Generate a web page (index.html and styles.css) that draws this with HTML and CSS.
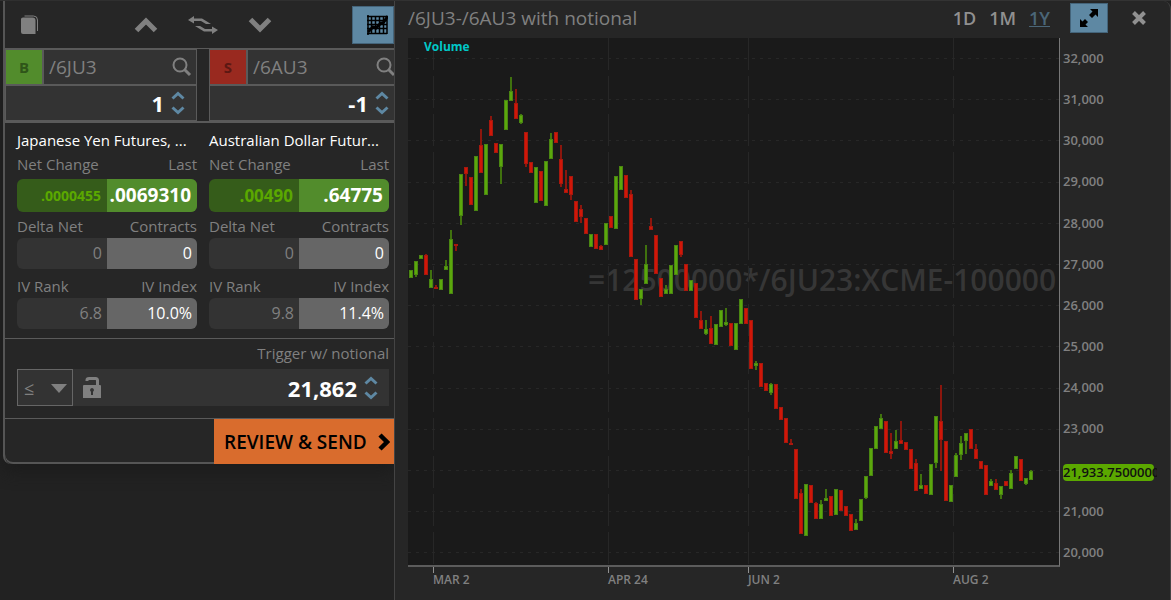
FILE: index.html
```html
<!DOCTYPE html>
<html lang="en">
    <head>
        <meta charset="UTF-8" />
        <meta name="viewport" content="width=device-width, initial-scale=1.0"/>
        <title>/6JU3-/6AU3 with notional</title>
        <link rel="stylesheet" href="styles.css">
    </head>
    <body>
        <div class="app">
            <aside class="side">
                <form class="ticket">
                    <div class="toolbar">
                        <button type="button" class="icon-btn" aria-label="Copy">
                            <svg width="18" height="20" viewBox="0 0 18 20"><path d="M3.500 1h9q4 0 4 4v11" fill="none" stroke="#808080"/><path d="M2 2.500h9.500q3 0 3 3V19H2q-2 0-2-2V4q0-1.500 2-1.500z" fill="#808080"/></svg>
                        </button>
                        <div class="moves">
                            <button type="button" class="icon-btn" aria-label="Up">
                                <svg width="24" height="16" viewBox="0 0 24 16"><path d="M2.500 13.500L12 4l9.500 9.500" fill="none" stroke="#808080" stroke-width="5"/></svg>
                            </button>
                            <button type="button" class="icon-btn" aria-label="Swap">
                                <svg width="32" height="20" viewBox="0 0 32 20"><path d="M1 5l6-4v2.500h8l9 5.500h-5l-5-3H7v2.500zM31 15l-6 4v-2.500h-8L8 11h5l5 3h7v-2.500z" fill="#808080"/></svg>
                            </button>
                            <button type="button" class="icon-btn" aria-label="Down">
                                <svg width="24" height="16" viewBox="0 0 24 16"><path d="M2.500 2.500L12 12l9.500-9.500" fill="none" stroke="#808080" stroke-width="5"/></svg>
                            </button>
                        </div>
                        <button type="button" class="blue-btn chart-toggle" aria-label="Chart">
                            <svg width="21" height="20" viewBox="0 0 21 20"><path d="M1 0v20M4.500 1v18M8.500 1v18M12.500 1v18M16.500 1v18M20 1v18M0 1.500h20M0 5.500h20M0 9.500h20M0 13.500h20M0 18.500h20" stroke="#000" stroke-width="1.500" fill="none"/><path d="M1 17l5-5 3 1 5-5 2 0 5-7" stroke="#000" stroke-width="3" fill="none"/></svg>
                        </button>
                    </div>

                    <div class="legs">
                        <div class="leg">
                            <div class="leg-row">
                                <button type="button" class="side-btn buy">B</button>
                                <input class="symbol" type="text" value="/6JU3" aria-label="Symbol 1">
                                <svg class="search" width="20" height="20" viewBox="0 0 20 20"><circle cx="8" cy="8" r="6.500" fill="none" stroke="#808080" stroke-width="2"/><path d="M12.500 12.500l5.500 5.500" stroke="#808080" stroke-width="3"/></svg>
                            </div>
                            <div class="leg-row">
                                <input class="qty" type="text" value="1" aria-label="Quantity 1">
                                <div class="spin">
                                    <button type="button" aria-label="Increase"><svg width="14" height="9" viewBox="0 0 14 9"><path d="M1.500 7.500L7 2.500l5.500 5" /></svg></button>
                                    <button type="button" aria-label="Decrease"><svg width="14" height="9" viewBox="0 0 14 9"><path d="M1.500 1.500L7 6.500l5.500-5" /></svg></button>
                                </div>
                            </div>
                        </div>
                        <div class="leg">
                            <div class="leg-row">
                                <button type="button" class="side-btn sell">S</button>
                                <input class="symbol" type="text" value="/6AU3" aria-label="Symbol 2">
                                <svg class="search" width="20" height="20" viewBox="0 0 20 20"><circle cx="8" cy="8" r="6.500" fill="none" stroke="#808080" stroke-width="2"/><path d="M12.500 12.500l5.500 5.500" stroke="#808080" stroke-width="3"/></svg>
                            </div>
                            <div class="leg-row">
                                <input class="qty" type="text" value="-1" aria-label="Quantity 2">
                                <div class="spin">
                                    <button type="button" aria-label="Increase"><svg width="14" height="9" viewBox="0 0 14 9"><path d="M1.500 7.500L7 2.500l5.500 5" /></svg></button>
                                    <button type="button" aria-label="Decrease"><svg width="14" height="9" viewBox="0 0 14 9"><path d="M1.500 1.500L7 6.500l5.500-5" /></svg></button>
                                </div>
                            </div>
                        </div>
                    </div>

                    <div class="quotes">
                        <div class="quote">
                            <div class="name">Japanese Yen Futures, ...</div>
                            <div class="labels"><span>Net Change</span><span>Last</span></div>
                            <div class="pair price"><span class="small">.0000455</span><span>.0069310</span></div>
                            <div class="labels"><span>Delta Net</span><span>Contracts</span></div>
                            <div class="pair"><span>0</span><span>0</span></div>
                            <div class="labels iv"><span>IV Rank</span><span>IV Index</span></div>
                            <div class="pair"><span>6.8</span><span>10.0%</span></div>
                        </div>
                        <div class="quote">
                            <div class="name">Australian Dollar Futur...</div>
                            <div class="labels"><span>Net Change</span><span>Last</span></div>
                            <div class="pair price"><span>.00490</span><span>.64775</span></div>
                            <div class="labels"><span>Delta Net</span><span>Contracts</span></div>
                            <div class="pair"><span>0</span><span>0</span></div>
                            <div class="labels iv"><span>IV Rank</span><span>IV Index</span></div>
                            <div class="pair"><span>9.8</span><span>11.4%</span></div>
                        </div>
                    </div>

                    <div class="trigger">
                        <label for="trigger">Trigger w/ notional</label>
                        <div class="trigger-row">
                            <div class="compare">
                                <select aria-label="Condition"><option>≤</option><option>≥</option></select>
                                <svg class="caret" width="16" height="9" viewBox="0 0 16 9"><path d="M0 0h16L8 9z" fill="#808080"/></svg>
                            </div>
                            <svg class="lock" width="18" height="21" viewBox="0 0 18 21"><path d="M4 4V3q0-1.500 2-1.500h6.500q2 0 2 2V9" fill="none" stroke="#808080" stroke-width="3"/><path fill-rule="evenodd" d="M1 8h16q1 0 1 1v12H0V9q0-1 1-1zm8 3a2 2 0 0 0-1 3.700V18h2v-3.300A2 2 0 0 0 9 11z" fill="#808080"/></svg>
                            <input class="qty" id="trigger" type="text" value="21,862">
                            <div class="spin">
                                <button type="button" aria-label="Increase"><svg width="14" height="9" viewBox="0 0 14 9"><path d="M1.500 7.500L7 2.500l5.500 5" /></svg></button>
                                <button type="button" aria-label="Decrease"><svg width="14" height="9" viewBox="0 0 14 9"><path d="M1.500 1.500L7 6.500l5.500-5" /></svg></button>
                            </div>
                        </div>
                    </div>

                    <div class="send-row">
                        <button type="submit" class="send">REVIEW &amp; SEND
                            <svg width="12" height="18" viewBox="0 0 12 18"><path d="M2 2l7 7-7 7" fill="none" stroke="#000" stroke-width="4.500"/></svg>
                        </button>
                    </div>
                </form>
            </aside>

            <main class="chart">
                <header class="chart-head">
                    <h1>/6JU3-/6AU3 with notional</h1>
                    <nav class="ranges">
                        <a href="#1d">1D</a>
                        <a href="#1m">1M</a>
                        <a href="#1y" class="active">1Y</a>
                    </nav>
                    <button type="button" class="blue-btn expand" aria-label="Expand">
                        <svg width="20" height="20" viewBox="0 0 20 20"><path d="M19 1v8l-2.500-2.500-3.500 3.500-3-3 3.500-3.500L11 1zM1 19v-8l2.500 2.500L6 11l3 3-2.500 2.500L9 19z" fill="#000"/></svg>
                    </button>
                    <button type="button" class="icon-btn close" aria-label="Close">
                        <svg width="14" height="14" viewBox="0 0 14 14"><path d="M1.500 1.500l11 11M12.500 1.500l-11 11" stroke="#909090" stroke-width="4"/></svg>
                    </button>
                </header>
                <div class="chart-body">
                    <div class="plot">
                        <div class="watermark">=12500000*/6JU23:XCME-100000</div>
                        <svg id="candles" viewBox="0 0 651 527" preserveAspectRatio="none" shape-rendering="crispEdges"></svg>
                        <div class="study">Volume</div>
                    </div>
                    <div class="y-axis">
                        <span>32,000</span>
                        <span>31,000</span>
                        <span>30,000</span>
                        <span>29,000</span>
                        <span>28,000</span>
                        <span>27,000</span>
                        <span>26,000</span>
                        <span>25,000</span>
                        <span>24,000</span>
                        <span>23,000</span>
                        <span class="current"><b>21,933.7500000</b></span>
                        <span>21,000</span>
                        <span>20,000</span>
                    </div>
                    <div class="x-axis">
                        <span>MAR 2</span>
                        <span>APR 24</span>
                        <span>JUN 2</span>
                        <span>AUG 2</span>
                    </div>
                </div>
            </main>
        </div>
        <script src="chart.js"></script>
    </body>
</html>
```
FILE: styles.css
```css
* {
    box-sizing: border-box;
}
body {
    margin: 0;
    background-color: #222;
    color: #808080;
    font-family: "Open Sans", "Noto Sans", sans-serif;
    font-size: 15px;
}
button, input, select {
    margin: 0;
    padding: 0;
    border: 0;
    border-radius: 0;
    background: none;
    color: inherit;
    font-family: inherit;
}
svg {
    display: block;
    flex: none;
}
.app {
    display: flex;
    min-height: 100vh;
    border-top: 1px solid #333;
}
.side {
    flex: none;
    width: 394px;
    padding-left: 3px;
}
.ticket {
    overflow: hidden;
    border-left: 2px solid #555;
    border-radius: 0 0 0 8px;
    background-color: #262626;
    box-shadow: 0 8px 16px #1c1c1c;
}

/* toolbar */
.toolbar {
    display: flex;
    align-items: center;
    justify-content: space-between;
    height: 48px;
    padding-left: 16px;
    border-bottom: 1px solid #5a5a5a;
}
.icon-btn {
    display: flex;
}
.moves {
    display: flex;
    align-items: center;
    gap: 29px;
    padding-left: 14px;
}
.blue-btn {
    display: flex;
    align-items: center;
    justify-content: center;
    border: 1px solid #44647a;
    background-color: #5e88a3;
}
.chart-toggle {
    width: 42px;
    height: 38px;
    padding-left: 8px;
}

/* legs */
.legs {
    display: grid;
    grid-template-columns: 192px 192px;
    gap: 12px;
    border-bottom: 2px solid #5a5a5a;
}
.leg-row {
    display: flex;
    align-items: center;
    height: 36px;
    border: 1px solid #5a5a5a;
    background-color: #333;
}
.side-btn {
    width: 38px;
    height: 34px;
    border-right: 2px solid #5a5a5a;
    font-size: 15px;
    font-weight: bold;
}
.buy {
    background-color: #528c2c;
    color: #2f5519;
}
.sell {
    background-color: #99291f;
    color: #5c1813;
}
.symbol {
    flex: 1;
    min-width: 0;
    height: 32px;
    padding-left: 5px;
    font-size: 19px;
}
.search {
    margin-right: 4px;
}
.qty {
    flex: 1;
    min-width: 0;
    height: 32px;
    padding-right: 7px;
    color: #fff;
    font-size: 22px;
    font-weight: bold;
    text-align: right;
}
.spin {
    display: flex;
    flex-direction: column;
    gap: 6px;
    margin-right: 11px;
}
.spin button {
    display: block;
}
.spin path {
    fill: none;
    stroke: #5e88a3;
    stroke-width: 3;
}

/* quotes */
.quotes {
    display: grid;
    grid-template-columns: 180px 180px;
    gap: 12px;
    padding: 5px 0 9px 12px;
    border-bottom: 1px solid #5a5a5a;
}
.name, .labels {
    height: 24px;
    line-height: 24px;
    white-space: nowrap;
}
.name {
    color: #fff;
}
.labels {
    display: flex;
    justify-content: space-between;
}
.iv {
    margin-top: 5px;
}
.pair {
    display: grid;
    grid-template-columns: 1fr 1fr;
    overflow: hidden;
    height: 31px;
    border-radius: 6px;
    background-color: #333;
    font-size: 16px;
    line-height: 31px;
    text-align: right;
}
.pair span {
    padding-right: 5px;
}
.pair span:last-child {
    background-color: #666;
    color: #fff;
}
.price {
    height: 33px;
    margin: 3px 0 2px;
    background-color: #355c1a;
    color: #5ba800;
    font-size: 17px;
    font-weight: bold;
    line-height: 33px;
}
.price span {
    padding-right: 6px;
}
.price .small {
    font-size: 14px;
}
.price span:last-child {
    background-color: #528c2c;
    font-size: 19px;
}

/* trigger */
.trigger {
    padding: 2px 5px 12px 12px;
    border-bottom: 1px solid #5a5a5a;
}
.trigger label {
    display: block;
    margin-bottom: 4px;
    line-height: 24px;
    text-align: right;
}
.trigger-row {
    display: flex;
    align-items: center;
    height: 37px;
    background-color: #333;
}
.compare {
    position: relative;
    width: 56px;
    height: 37px;
    border: 1px solid #666;
}
.compare select {
    width: 100%;
    height: 100%;
    padding-left: 6px;
    appearance: none;
    font-size: 18px;
}
.caret {
    position: absolute;
    top: 14px;
    right: 5px;
    pointer-events: none;
}
.lock {
    margin-left: 10px;
}
.send-row {
    display: flex;
    justify-content: flex-end;
    height: 45px;
    border-radius: 0 0 0 8px;
    box-shadow: inset 0 -2px #555;
}
.send {
    display: flex;
    align-items: center;
    justify-content: space-between;
    width: 180px;
    height: 45px;
    padding: 0 4px 0 10px;
    background-color: #d96c2d;
    color: #000;
    font-size: 19px;
    font-weight: 600;
}

/* chart */
.chart {
    display: flex;
    flex: 1;
    flex-direction: column;
    min-width: 0;
    padding-left: 13px;
    border: 1px solid #444;
    border-width: 0 1px 0 1px;
    border-radius: 0 8px 0 0;
    background-color: #262626;
}
.chart-head {
    display: flex;
    align-items: center;
    height: 37px;
    padding: 0 24px 3px 0;
}
.chart-head h1 {
    flex: 1;
    margin: 0;
    font-size: 19px;
    font-weight: normal;
}
.ranges {
    display: flex;
    gap: 13px;
    margin-right: 20px;
}
.ranges a {
    color: #909090;
    font-size: 18px;
    font-weight: 600;
    text-decoration: none;
}
.ranges .active {
    color: #4b6678;
    text-decoration: underline;
}
.expand {
    width: 38px;
    height: 30px;
}
.close {
    margin-left: 24px;
}
.chart-body {
    display: grid;
    flex: 1;
    grid-template-columns: 1fr 110px;
    grid-template-rows: 1fr 33px;
}
.plot {
    position: relative;
    overflow: hidden;
    border-right: 1px solid #777;
    border-bottom: 2px solid #5c5c5c;
    background-color: #1a1a1a;
}
.plot svg {
    position: absolute;
    width: 100%;
    height: 100%;
}
.watermark {
    position: absolute;
    top: 46%;
    left: 180px;
    transform: translateY(-50%);
    color: #363636;
    font-size: 30px;
    font-weight: 600;
    line-height: 36px;
    white-space: nowrap;
}
.study {
    position: absolute;
    top: 0;
    left: 16px;
    color: #00c8c8;
    font-size: 12px;
    font-weight: bold;
    line-height: 18px;
}
.y-axis {
    display: flex;
    flex-direction: column;
    justify-content: space-between;
    padding: 12px 0 7px 3px;
    font-size: 13px;
    font-weight: 600;
    line-height: 16px;
}
.current {
    overflow: hidden;
    width: 94px;
    height: 17px;
    margin: 2px 0 -3px;
    color: #111;
}
.current b {
    display: block;
    width: 91px;
    border-radius: 4px;
    background-color: #5ba800;
    font-weight: 600;
    line-height: 17px;
}
.x-axis {
    display: grid;
    grid-template-columns: 175fr 140fr 205fr 107fr;
    padding-left: 25px;
    font-size: 12px;
    font-weight: 600;
    line-height: 14px;
}
.x-axis span::before {
    display: block;
    width: 1px;
    height: 6px;
    background-color: #909090;
    content: "";
}

/* candles */
.grid-h {
    stroke: #272727;
    stroke-dasharray: 3 5;
}
.grid-v {
    stroke: #272727;
    stroke-dasharray: 32 6;
}
.up {
    fill: #5ba80c;
    stroke: #4a8612;
}
.down {
    fill: #d01708;
    stroke: #a8180e;
}
.wick-up {
    fill: #40720e;
}
.wick-down {
    fill: #8c160d;
}
```
FILE: chart.js
```js
// one bar per entry: direction, high, body top, body bottom, low
const bars = `
u 232 232 240 240|u 223 223 237 239|u 217 217 221 221|d 216 217 237 237|u 232 241 250 250
d 247 249 251 251|u 241 241 252 252|u 222 228 232 232|u 192 201 256 256|d 206 206 208 213
u 136 136 178 187|d 129 129 136 148|d 139 139 167 167|u 118 118 173 173|d 91 107 135 135
u 106 106 157 157|d 78 82 98 98|d 105 105 115 115|u 106 106 129 146|u 62 62 92 92
u 39 53 63 63|d 51 65 81 81|u 76 77 85 86|d 94 94 126 129|d 124 124 135 135
u 129 129 165 165|d 133 133 163 163|u 123 123 168 168|u 95 101 121 121|d 94 94 105 105
d 107 121 146 149|d 132 151 155 155|d 138 138 157 162|d 163 163 184 184|d 167 171 179 185
d 180 180 196 196|u 196 196 209 209|d 196 196 211 211|d 207 208 212 212|u 185 185 207 207
d 178 178 190 190|u 138 138 191 191|u 128 128 152 152|d 137 137 160 160|d 152 156 219 219
d 221 221 262 262|u 251 251 261 267|u 207 226 246 246|d 180 188 192 192|d 197 197 236 236
d 240 240 259 259|u 247 251 256 256|u 227 227 256 256|u 207 207 237 237|d 203 203 217 219
d 226 226 253 253|u 242 242 253 253|d 245 245 280 280|d 273 282 291 291|u 282 291 296 297
d 278 290 306 306|u 286 286 307 307|u 272 272 289 289|u 270 284 287 288|d 285 285 308 308
u 285 285 312 312|u 261 261 286 286|d 270 270 286 286|d 282 282 331 331|u 323 325 328 332
d 325 325 349 349|d 345 345 353 353|u 345 346 355 357|d 346 346 371 371|d 369 369 382 382
d 380 380 405 405|d 401 405 407 407|d 411 411 461 461|d 451 455 496 496|u 446 446 498 498
d 447 447 465 465|d 464 465 481 481|u 462 466 481 481|u 451 460 463 463|d 458 458 478 478
u 451 451 477 477|d 452 452 473 473|d 468 468 478 478|d 476 476 493 493|u 481 485 492 492
u 461 461 483 483|u 438 438 460 461|u 410 410 438 438|u 388 388 411 411|u 376 380 391 391
d 383 383 415 415|d 395 413 416 421|u 392 403 411 411|d 383 402 406 406|d 404 404 412 412
d 411 411 431 431|d 421 425 453 453|u 436 447 451 451|d 447 447 456 456|u 426 426 457 457
u 378 378 425 430|d 347 383 402 433|d 403 403 463 463|u 447 447 464 464|u 415 417 439 439
u 398 405 417 422|u 395 395 403 416|d 391 391 411 411|d 406 411 421 421|d 423 423 431 431
d 427 427 457 457|u 441 443 448 448|d 441 445 452 452|u 448 448 457 461|d 443 443 448 448
u 432 435 451 451|u 418 418 431 431|d 421 421 443 443|u 440 440 446 447|u 432 433 442 442
`.trim().split(/[|\n]/);

const svg = document.getElementById('candles');
let out = '';
for (let i = 0; i <= 12; i++) {
    const y = Math.round(20 + i * 41.2) + 0.5;
    out += `<line class="grid-h" x1="0" x2="651" y1="${y}" y2="${y}"/>`;
}
for (const x of [25.5, 200.5, 340.5, 545.5]) {
    out += `<line class="grid-v" x1="${x}" x2="${x}" y1="0" y2="527"/>`;
}
bars.forEach((bar, i) => {
    const [dir, high, top, bottom, low] = bar.split(' ');
    const side = dir === 'u' ? 'up' : 'down';
    const x = 3 + i * 5;
    out += `<rect class="wick-${side}" x="${x - 1}" y="${high}" width="2" height="${low - high}"/>`;
    out += `<rect class="${side}" x="${x - 1.5}" y="${+top + 0.5}" width="3" height="${bottom - top - 1}"/>`;
});
svg.innerHTML = out;
```
